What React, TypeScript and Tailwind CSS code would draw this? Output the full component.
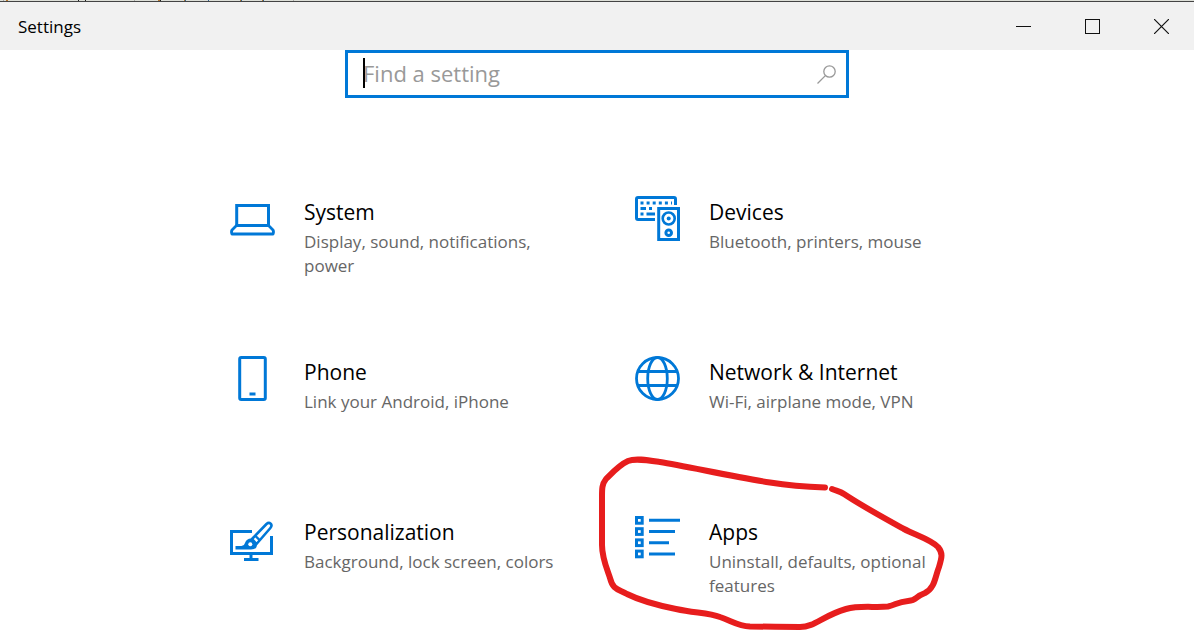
import type { ReactNode } from "react";

const stroke = { fill: "none", stroke: "#0078d7", strokeWidth: 3 } as const;

function LaptopIcon() {
  return (
    <svg viewBox="0 0 45 45" className="size-[45px] shrink-0" aria-hidden="true">
      <g {...stroke}>
        <path d="M6.700 30V9.500H38.500V30" />
        <path d="M6.500 29.500H38.500L43 34Q44 36 43 38H2Q1 36 2 34Z" strokeWidth="2.800" strokeLinejoin="round" />
      </g>
    </svg>
  );
}

function DevicesIcon() {
  return (
    <svg viewBox="0 0 45 45" className="size-[45px] shrink-0" aria-hidden="true">
      <g {...stroke}>
        <path d="M20 23.5H3Q1.5 23.5 1.5 22V3Q1.5 1.5 3 1.5H39Q40.5 1.5 40.5 3V9" />
        <path d="M5.5 7H37" strokeDasharray="3 3.1" />
        <path d="M5.5 12.5H11M14 12.5H17M5.5 18H8.5M11.5 18H20" />
        <rect x="23.7" y="12.5" width="19.8" height="31" />
        <circle cx="33.7" cy="22.5" r="6" strokeWidth="2.6" />
        <circle cx="33.7" cy="36.7" r="2.8" strokeWidth="3" />
      </g>
      <circle cx="33.7" cy="22.5" r="2" fill="#0078d7" />
    </svg>
  );
}

function PhoneIcon() {
  return (
    <svg viewBox="0 0 45 45" className="size-[45px] shrink-0" aria-hidden="true">
      <rect x="9.7" y="1.5" width="25.6" height="42" rx="1.5" {...stroke} />
      <rect x="19.5" y="36.5" width="6" height="3" fill="#0078d7" />
    </svg>
  );
}

function GlobeIcon() {
  return (
    <svg viewBox="0 0 45 45" className="size-[45px] shrink-0" aria-hidden="true">
      <g {...stroke} strokeWidth={2.8}>
        <circle cx="22.5" cy="22.5" r="21" />
        <ellipse cx="22.5" cy="22.5" rx="9.8" ry="21" />
        <path d="M2.5 15.5H42.5M2.5 29.5H42.5" />
      </g>
    </svg>
  );
}

function PersonalizationIcon() {
  return (
    <svg viewBox="0 0 45 45" className="size-[45px] shrink-0" aria-hidden="true">
      <g {...stroke}>
        <path d="M22 15.500H1.500V37.500H41.500V20" />
        <path d="M21 37.500V43.500M14 43.500H28.500" />
        <path d="M22 23L36.500 8Q38.800 6 40.700 7.700Q42.400 9.700 40.400 12L26.500 28Z" strokeWidth="2.600" strokeLinejoin="round" />
        <path d="M25.500 20L30 24.500" strokeWidth="2.400" />
      </g>
      <path d="M5.500 30H11.500Q14.500 29.500 15 27Q16.500 22.500 21 22.500L27 28.500Q27 33.500 21 33.500H5.500Z" fill="#0078d7" />
      <circle cx="20.300" cy="28.300" r="2" fill="#fff" />
    </svg>
  );
}

function AppsIcon() {
  return (
    <svg viewBox="0 0 45 45" className="size-[45px] shrink-0" aria-hidden="true">
      <g {...stroke}>
        <rect x="1.500" y="1.500" width="5.700" height="5.700" />
        <rect x="1.500" y="12.700" width="5.700" height="5.700" />
        <rect x="1.500" y="23.900" width="5.700" height="5.700" />
        <rect x="1.500" y="35.100" width="5.700" height="5.700" />
        <path d="M14 4.300H45M14 15.500H40M14 26.700H34M14 37.900H40" />
      </g>
    </svg>
  );
}

function RedMarker() {
  return (
    <svg
      viewBox="597 455 350 176"
      className="pointer-events-none absolute -top-[61px] left-0 h-[176px] w-[350px] max-w-none"
      aria-hidden="true"
    >
      <g fill="none" stroke="#e71d1d" strokeWidth="6" strokeLinecap="round" strokeLinejoin="round">
        <path d="M825 487.500C809 487 791 486 770 482.500C735 477 685 466 660 462C647 460 635 458 628 461C619 465 611 474 606 479C602 484 602 489 602 496V545C602 558 607 569 610 578C613 590 618 589 627 594C643 602 661 606 676 609C695 613 709 613 720 617C732 621 738 626 750 626.500C765 626.500 785 627 800 627C815 627 822 616 846 609C860 605 875 608 888 606.500C896 605 897 602 908 601C918 600 914 597 925 593C935 588 935 577 939 567C942 557 943 553 938 547C930 539 915 535 904 529C884 518 862 506 844 494C840 491 837 491 832 489" />
      </g>
    </svg>
  );
}

function WindowEdge() {
  return (
    <div className="h-px overflow-hidden bg-[#dddfd8]" aria-hidden="true">
      <svg viewBox="0 0 320 1" className="block h-px w-80" shapeRendering="crispEdges">
        <path d="M3 .5h1M134 .5h1M293 .5h1" stroke="#aaa" />
        <path d="M6 .5h2M158 .5h2M184 .5h1M240 .5h1M262 .5h1" stroke="#b5762c" />
        <path d="M78 .5h1M85 .5h1M160 .5h1" stroke="#222" />
        <path d="M185 .5h1M208 .5h1M241 .5h1M263 .5h1" stroke="#2f6496" />
      </svg>
    </div>
  );
}

type Category = { title: string; detail: string; icon: ReactNode; marked?: boolean };

const categories: Category[] = [
  { title: "System", detail: "Display, sound, notifications, power", icon: <LaptopIcon /> },
  { title: "Devices", detail: "Bluetooth, printers, mouse", icon: <DevicesIcon /> },
  { title: "Phone", detail: "Link your Android, iPhone", icon: <PhoneIcon /> },
  { title: "Network & Internet", detail: "Wi-Fi, airplane mode, VPN", icon: <GlobeIcon /> },
  { title: "Personalization", detail: "Background, lock screen, colors", icon: <PersonalizationIcon /> },
  { title: "Apps", detail: "Uninstall, defaults, optional features", icon: <AppsIcon />, marked: true },
];

function Tile({ title, detail, icon, marked }: Category) {
  return (
    <div className="relative">
      <a href="#" className="flex min-h-24 gap-[29px] pl-[38px]">
        {icon}
        <span className="flex w-[252px] flex-col gap-1 pt-0.5">
          <span className="text-[21px] leading-7 text-black">{title}</span>
          <span className="text-[17px] leading-6 text-[#666]">{detail}</span>
        </span>
      </a>
      {marked && <RedMarker />}
    </div>
  );
}

export default function App() {
  return (
    <div className="min-h-screen overflow-hidden bg-white font-['Open_Sans','Noto_Sans',sans-serif]">
      <WindowEdge />
      <header className="flex h-[49px] items-center justify-between border-t border-[#444] bg-[#f1f1f1] pl-[18px]">
        <h1 className="pt-0.5 text-[17px] leading-6 text-black">Settings</h1>
        <div className="flex h-full -mr-0.5">
          <button type="button" aria-label="Minimize" className="flex w-[69px] items-center justify-center">
            <svg viewBox="0 0 15 15" className="size-[15px]"><path d="M0 7.500H15" stroke="#111" /></svg>
          </button>
          <button type="button" aria-label="Maximize" className="flex w-[69px] items-center justify-center">
            <svg viewBox="0 0 15 15" className="size-[15px]"><rect x=".5" y=".5" width="14" height="14" fill="none" stroke="#111" /></svg>
          </button>
          <button type="button" aria-label="Close" className="flex w-[69px] items-center justify-center">
            <svg viewBox="0 0 15 15" className="size-[15px]"><path d="M0 0L15 15M15 0L0 15" stroke="#111" strokeWidth="1.200" /></svg>
          </button>
        </div>
      </header>
      <main>
        <label className="relative mx-auto flex h-12 w-full max-w-[504px] items-center border-3 border-[#0078d7] bg-white pr-2.5 pl-[15px]">
          <span className="absolute top-[5px] left-[15px] h-[30px] w-0.5 bg-black" />
          <input
            type="text"
            aria-label="Find a setting"
            placeholder="Find a setting"
            className="min-w-0 flex-1 bg-transparent pb-0.5 text-[22px] leading-8 text-black caret-transparent outline-none placeholder:text-[#999]"
          />
          <svg viewBox="0 0 19 19" className="size-[19px]" aria-hidden="true">
            <g fill="none" stroke="#999" strokeWidth="1.300">
              <circle cx="12.500" cy="6.500" r="5.700" />
              <path d="M8.400 10.600L.5 18.500" />
            </g>
          </svg>
        </label>
        <nav className="mx-auto mt-[98px] grid max-w-[810px] grid-cols-2 gap-y-16">
          {categories.map((c) => (
            <Tile key={c.title} {...c} />
          ))}
        </nav>
      </main>
    </div>
  );
}
